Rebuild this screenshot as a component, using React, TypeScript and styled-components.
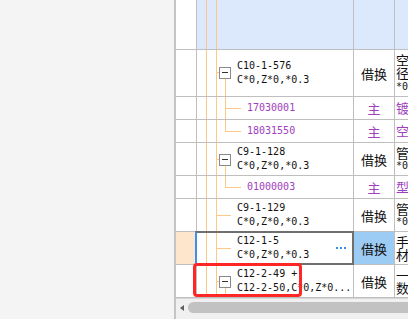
import React from "react";
import styled, { createGlobalStyle, css } from "styled-components";

const GlobalStyle = createGlobalStyle`
  html, body { margin: 0; padding: 0; background: #f4f4f4; }
  body { width: 408px; height: 319px; overflow: hidden; font-family: "DejaVu Sans Mono", monospace; }
  * { box-sizing: border-box; }
`;

const GRID = "#bfbfbf";
const TREE = "#fcc888";
const PURPLE = "#a03ec0";

const Page = styled.div`
  display: flex;
  width: 408px;
  height: 319px;
  overflow: hidden;
  background: #f4f4f4;
`;

const SidePane = styled.div`
  width: 174px;
  flex: none;
  background: #f4f4f4;
`;

const Splitter = styled.div`
  width: 2px;
  flex: none;
  background: #c4c4c4;
`;

const GridArea = styled.div`
  flex: 1;
  min-width: 0;
  display: flex;
  flex-direction: column;
  position: relative;
  background: #f4f4f4;
`;

const Body = styled.div`
  display: flex;
  flex-direction: column;
  gap: 1px;
  background: ${GRID};
  padding-bottom: 1px;
`;

const Row = styled.div<{ $h: number }>`
  display: grid;
  grid-template-columns: 20px 156px 40px 1fr;
  column-gap: 1px;
  height: ${(p) => p.$h}px;
  background: ${GRID};
`;

const RowHead = styled.div<{ $active?: boolean }>`
  background: ${(p) => (p.$active ? "#fde6cb" : "#ffffff")};
`;

const MainCell = styled.div<{ $header?: boolean; $selected?: boolean }>`
  position: relative;
  display: flex;
  align-items: center;
  background: ${(p) => (p.$header ? "#dce8fb" : "#ffffff")};
  ${(p) =>
    p.$selected &&
    css`
      &::after {
        content: "";
        position: absolute;
        top: -1px;
        left: -2px;
        right: -1px;
        bottom: -1px;
        border: 2px solid #6f6f6f;
        border-left-color: #3d8ff0;
        pointer-events: none;
        z-index: 2;
      }
    `}
`;

const Gutter = styled.svg`
  flex: none;
  align-self: stretch;
  display: block;
`;

const TextBlock = styled.div<{ $purple?: boolean }>`
  font-family: "DejaVu Sans Mono", "Liberation Mono", monospace;
  font-size: 10px;
  line-height: 14px;
  white-space: pre;
  overflow: hidden;
  color: ${(p) => (p.$purple ? PURPLE : "#111111")};
`;

const Dots = styled.div`
  margin-left: auto;
  margin-right: 7px;
  display: flex;
  gap: 2px;
  & > span {
    width: 2px;
    height: 2px;
    background: #3a8ee6;
  }
`;

const OpCell = styled.div<{ $header?: boolean; $selected?: boolean; $purple?: boolean }>`
  display: flex;
  align-items: center;
  justify-content: center;
  background: ${(p) => (p.$header ? "#dce8fb" : p.$selected ? "#9ccbf4" : "#ffffff")};
  font-family: "Noto Sans CJK SC", "Noto Sans", sans-serif;
  font-size: 13px;
  color: ${(p) => (p.$purple ? PURPLE : "#111111")};
`;

const LastCell = styled.div<{ $header?: boolean }>`
  display: flex;
  flex-direction: column;
  justify-content: center;
  overflow: hidden;
  padding-left: 1px;
  background: ${(p) => (p.$header ? "#dce8fb" : "#ffffff")};
`;

const LastLine = styled.div<{ $mono?: boolean; $purple?: boolean }>`
  white-space: pre;
  line-height: 13.5px;
  font-family: ${(p) =>
    p.$mono ? `"DejaVu Sans Mono", monospace` : `"Noto Sans CJK SC", sans-serif`};
  font-size: ${(p) => (p.$mono ? "10px" : "13px")};
  color: ${(p) => (p.$purple ? PURPLE : "#111111")};
`;

const HScroll = styled.div`
  height: 21px;
  display: flex;
  align-items: flex-start;
  padding-top: 4px;
  padding-left: 4px;
  gap: 4px;
  background: #f0f0f0;
  border-top: 1px solid #d6d6d6;
`;

const ArrowLeft = styled.div`
  width: 0;
  height: 0;
  margin-top: 2px;
  border-top: 3.5px solid transparent;
  border-bottom: 3.5px solid transparent;
  border-right: 4px solid #5e5e5e;
`;

const Thumb = styled.div`
  flex: 1;
  height: 11px;
  margin-top: -1px;
  border-radius: 6px 0 0 6px;
  background: #c2c2c2;
`;

const Annotation = styled.div`
  position: absolute;
  left: 17px;
  top: 263px;
  width: 109px;
  height: 34px;
  border: 3px solid #ff2626;
  border-radius: 4px;
  pointer-events: none;
  z-index: 3;
`;

type Kind = "header" | "parent" | "child" | "lastChild" | "leaf";

function TreeLines({ kind, h, center }: { kind: Kind; h: number; center?: number }) {
  const w = kind === "child" || kind === "lastChild" ? 50 : 40;
  const c = (center ?? Math.floor(h / 2)) + 0.5;
  const V1 = 9.5;
  const V2 = 19.5;
  const CV = 28.5;
  return (
    <Gutter width={w} height={h} viewBox={`0 0 ${w} ${h}`} shapeRendering="crispEdges">
      <line x1={V1} y1={0} x2={V1} y2={h} stroke={TREE} />
      <line x1={V2} y1={0} x2={V2} y2={h} stroke={TREE} />
      {kind === "parent" && (
        <>
          <line x1={V2} y1={c} x2={22} y2={c} stroke={TREE} />
          <line x1={CV} y1={c + 6} x2={CV} y2={h} stroke={TREE} />
          <rect x={22.5} y={c - 5.5} width={11} height={11} fill="#fff" stroke="#8a8a8a" />
          <line x1={25} y1={c} x2={31} y2={c} stroke="#333" />
        </>
      )}
      {kind === "child" && (
        <>
          <line x1={CV} y1={0} x2={CV} y2={h} stroke={TREE} />
          <line x1={CV} y1={c} x2={44} y2={c} stroke={TREE} />
        </>
      )}
      {kind === "lastChild" && (
        <>
          <line x1={CV} y1={0} x2={CV} y2={c} stroke={TREE} />
          <line x1={CV} y1={c} x2={44} y2={c} stroke={TREE} />
        </>
      )}
      {kind === "leaf" && <line x1={V2} y1={c} x2={34} y2={c} stroke={TREE} />}
    </Gutter>
  );
}

type RowData = {
  h: number;
  kind: Kind;
  center?: number;
  lines: string[];
  op: string;
  purple?: boolean;
  selected?: boolean;
  last: { t: string; mono?: boolean }[];
};

const rows: RowData[] = [
  {
    h: 46,
    kind: "parent",
    center: 22,
    lines: ["C10-1-576", "C*0,Z*0,*0.3"],
    op: "借换",
    last: [{ t: "空调" }, { t: "径" }, { t: "*0", mono: true }],
  },
  { h: 22, kind: "child", lines: ["17030001"], op: "主", purple: true, last: [{ t: "镀锌" }] },
  { h: 22, kind: "lastChild", lines: ["18031550"], op: "主", purple: true, last: [{ t: "空调" }] },
  {
    h: 32,
    kind: "parent",
    lines: ["C9-1-128", "C*0,Z*0,*0.3"],
    op: "借换",
    last: [{ t: "管道" }, { t: "*0", mono: true }],
  },
  { h: 22, kind: "lastChild", lines: ["01000003"], op: "主", purple: true, last: [{ t: "型钢" }] },
  {
    h: 32,
    kind: "leaf",
    lines: ["C9-1-129", "C*0,Z*0,*0.3"],
    op: "借换",
    last: [{ t: "管道" }, { t: "*0", mono: true }],
  },
  {
    h: 32,
    kind: "leaf",
    selected: true,
    lines: ["C12-1-5", "C*0,Z*0,*0.3"],
    op: "借换",
    last: [{ t: "手工" }, { t: "材料" }],
  },
  {
    h: 32,
    kind: "parent",
    lines: ["C12-2-49 +", "C12-2-50,C*0,Z*0..."],
    op: "借换",
    last: [{ t: "一般" }, { t: "数量" }],
  },
];

export default function App() {
  return (
    <>
      <GlobalStyle />
      <Page>
        <SidePane />
        <Splitter />
        <GridArea>
          <Body>
            <Row $h={49}>
              <RowHead />
              <MainCell $header>
                <TreeLines kind="header" h={49} />
              </MainCell>
              <OpCell $header />
              <LastCell $header />
            </Row>
            {rows.map((r, i) => (
              <Row key={i} $h={r.h}>
                <RowHead $active={r.selected} />
                <MainCell $selected={r.selected}>
                  <TreeLines kind={r.kind} h={r.h} center={r.center} />
                  <TextBlock $purple={r.purple}>{r.lines.join("\n")}</TextBlock>
                  {r.selected && (
                    <Dots>
                      <span />
                      <span />
                      <span />
                    </Dots>
                  )}
                </MainCell>
                <OpCell $selected={r.selected} $purple={r.purple}>
                  {r.op}
                </OpCell>
                <LastCell>
                  {r.last.map((l, j) => (
                    <LastLine key={j} $mono={l.mono} $purple={r.purple}>
                      {l.t}
                    </LastLine>
                  ))}
                </LastCell>
              </Row>
            ))}
          </Body>
          <HScroll>
            <ArrowLeft />
            <Thumb />
          </HScroll>
          <Annotation />
        </GridArea>
      </Page>
    </>
  );
}
